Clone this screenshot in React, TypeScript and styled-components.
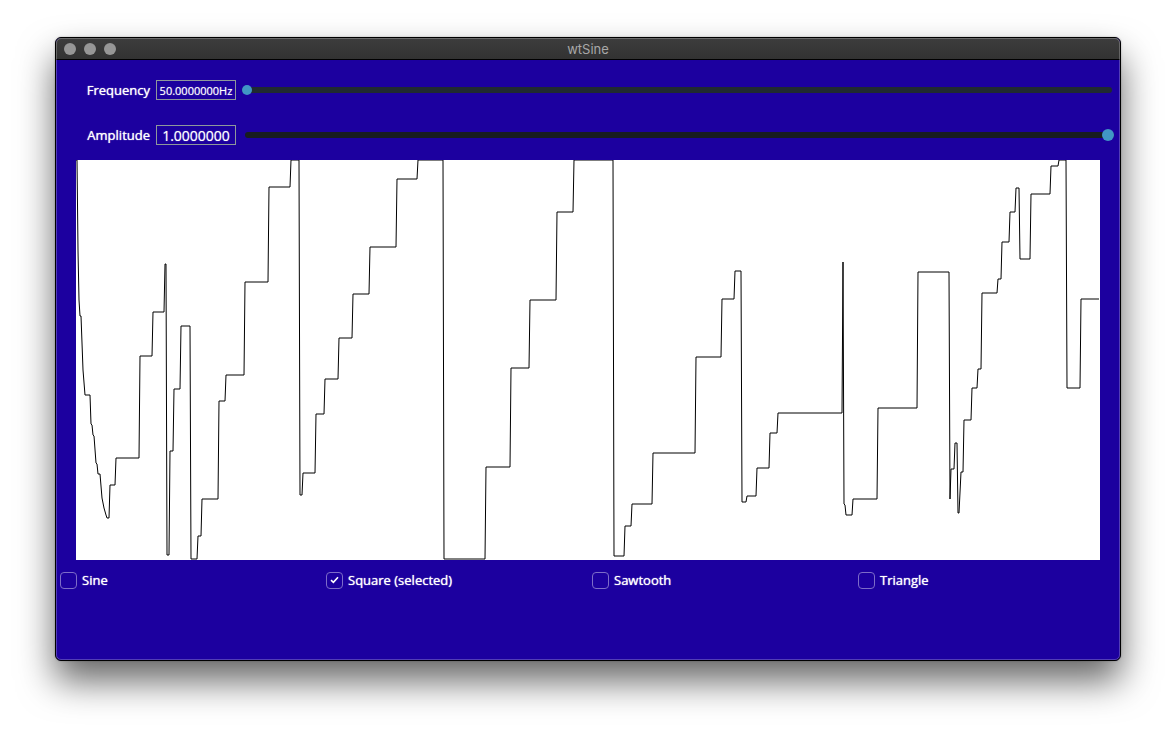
import React, { useState } from "react";
import styled, { createGlobalStyle } from "styled-components";

const GlobalStyle = createGlobalStyle`
  * { box-sizing: border-box; }
  body {
    margin: 0;
    background: #ffffff;
    color: #ffffff;
    font: 500 13px/20px "Open Sans", "Noto Sans", sans-serif;
  }
`;

const Desktop = styled.main`
  padding: 37px 55px 73px;
  overflow: hidden;
`;

const Window = styled.section`
  position: relative;
  border: 1px solid #000000;
  border-radius: 6px;
  background: #1c009f;
  box-shadow: 0 20px 36px rgba(0, 0, 0, 0.6), 0 0 2px rgba(0, 0, 0, 0.3);

  &::after {
    content: "";
    position: absolute;
    inset: 0;
    border: 1px solid rgba(255, 255, 255, 0.24);
    border-radius: 5px;
    pointer-events: none;
  }
`;

const TitleBar = styled.header`
  display: grid;
  grid-template-columns: 1fr auto 1fr;
  align-items: center;
  height: 22px;
  padding: 0 8px;
  border-bottom: 1px solid #000000;
  border-radius: 5px 5px 0 0;
  background: linear-gradient(#3d3d3d, #323232);
`;

const WindowButtons = styled.div`
  display: flex;
  gap: 8px;
`;

const WindowButton = styled.button`
  width: 12px;
  height: 12px;
  padding: 0;
  border: 0;
  border-radius: 50%;
  background: #969696;
`;

const Title = styled.h1`
  margin: 0;
  color: #a8a8a8;
  font: 400 13px/20px Inter, sans-serif;
`;

const Controls = styled.div`
  display: grid;
  gap: 25px;
  padding: 20px 6px 15px 0;
`;

const ControlRow = styled.div`
  display: grid;
  grid-template-columns: 94px 80px 1fr;
  column-gap: 6px;
  align-items: center;
  height: 20px;
`;

const ControlLabel = styled.label`
  text-align: right;
  text-shadow: 0 0 1px #ffffff;
`;

const ValueBox = styled.input<{ $small?: boolean }>`
  width: 80px;
  height: 20px;
  padding: 0;
  border: 1px solid #8e989b;
  border-radius: 0;
  outline: 0;
  background: transparent;
  color: #ffffff;
  text-align: center;
  text-shadow: 0 0 1px rgba(255, 255, 255, 0.6);
  font: 500 ${(p) => (p.$small ? 11 : 14)}px/18px "Open Sans", "Noto Sans", sans-serif;
`;

const Slider = styled.input<{ $thumb: number; $track: number; $tone: string; $start: number; $end: number }>`
  appearance: none;
  display: block;
  height: ${(p) => p.$thumb}px;
  margin: 0 ${(p) => p.$end}px 0 ${(p) => p.$start}px;
  background: transparent;

  &::-webkit-slider-runnable-track {
    height: ${(p) => p.$track}px;
    border-radius: 3px;
    background: ${(p) => p.$tone};
  }

  &::-webkit-slider-thumb {
    appearance: none;
    width: ${(p) => p.$thumb}px;
    height: ${(p) => p.$thumb}px;
    margin-top: ${(p) => (p.$track - p.$thumb) / 2}px;
    border-radius: 50%;
    background: #4196c5;
  }
`;

const Plot = styled.svg`
  display: block;
  width: calc(100% - 40px);
  height: 400px;
  margin: 0 20px;
  background: #ffffff;
`;

const Shapes = styled.div`
  display: grid;
  grid-template-columns: repeat(4, 1fr);
  padding: 10px 0 70px;
`;

const ShapeOption = styled.label`
  display: flex;
  align-items: center;
  gap: 5px;
  padding-left: 4px;
  text-shadow: 0 0 1px #ffffff;
`;

const TickBox = styled.span`
  display: grid;
  place-items: center;

  & > * {
    grid-area: 1 / 1;
  }
`;

const Tick = styled.input`
  appearance: none;
  width: 17px;
  height: 17px;
  margin: 0;
  border: 1px solid #7d6cc8;
  border-radius: 4px;
`;

const TickMark = styled.svg`
  width: 9px;
  height: 8px;
  pointer-events: none;
`;

const WAVE = `0,0 1,0 2,90 3,140 4,156 5,156 7,210 9,235 14,235 15,264 16,265 17,275 18,276 20,303
21,304 22,314 24,314 26,338 28,348 30,355 31,358 33,358 34,325 39,325 40,298 63,298 64,196 76,196 77,152
88,152 89,104 90,104 91,395 93,395 94,291 97,291 98,229 104,229 105,166 114,166 115,399 121,399
122,376 125,376 126,339 142,339 143,241 149,241 150,215 168,215 169,122 192,122 193,27 214,27
215,0 223,0 224,335 226,335 227,313 239,313 240,254 248,254 249,219 262,219 263,178 276,178
277,134 293,134 294,87 320,87 321,19 341,19 342,0 367,0 368,399 409,399 410,307 434,307 435,208
453,208 454,140 480,140 481,52 497,52 498,0 537,0 538,396 548,396 549,366 555,366 556,344 576,344
577,293 619,293 620,197 645,197 646,139 658,139 659,111 665,111 666,342 670,342 671,336 680,336
681,308 693,308 694,273 701,273 702,253 766,253 767,102 768,344 769,345 770,355 776,355 777,339
801,339 802,248 841,248 842,112 873,112 874,339 875,309 878,309 879,283 881,283 882,353 883,353
885,312 887,312 888,260 895,260 896,228 901,228 902,209 905,209 906,133 921,133 922,119 925,119
926,82 933,82 934,52 939,52 940,28 943,28 944,99 954,99 955,34 974,34 975,6 982,6 983,0 990,0
991,228 1004,228 1005,139 1023,139`;

const SHAPES = ["Sine", "Square", "Sawtooth", "Triangle"];

export default function App() {
  const [frequency, setFrequency] = useState(50);
  const [amplitude, setAmplitude] = useState(1);
  const [shape, setShape] = useState("Square");

  return (
    <>
      <GlobalStyle />
      <Desktop>
        <Window>
          <TitleBar>
            <WindowButtons>
              <WindowButton aria-label="Close" />
              <WindowButton aria-label="Minimize" />
              <WindowButton aria-label="Zoom" />
            </WindowButtons>
            <Title>wtSine</Title>
          </TitleBar>
          <Controls>
            <ControlRow>
              <ControlLabel htmlFor="frequency">Frequency</ControlLabel>
              <ValueBox $small readOnly aria-label="Frequency value" value={`${frequency.toFixed(7)}Hz`} />
              <Slider
                id="frequency"
                type="range"
                min={50}
                max={5000}
                step="any"
                value={frequency}
                onChange={(e) => setFrequency(Number(e.target.value))}
                $thumb={10}
                $track={6}
                $tone="#202a30"
                $start={0}
                $end={2}
              />
            </ControlRow>
            <ControlRow>
              <ControlLabel htmlFor="amplitude">Amplitude</ControlLabel>
              <ValueBox readOnly aria-label="Amplitude value" value={amplitude.toFixed(7)} />
              <Slider
                id="amplitude"
                type="range"
                min={0}
                max={1}
                step="any"
                value={amplitude}
                onChange={(e) => setAmplitude(Number(e.target.value))}
                $thumb={12}
                $track={6}
                $tone="#181c20"
                $start={3}
                $end={0}
              />
            </ControlRow>
          </Controls>
          <Plot viewBox="0 0 1024 400" preserveAspectRatio="none" role="img" aria-label="Waveform">
            <polyline points={WAVE} fill="none" stroke="#000000" strokeWidth="1" vectorEffect="non-scaling-stroke" />
          </Plot>
          <Shapes>
            {SHAPES.map((name) => (
              <ShapeOption key={name}>
                <TickBox>
                  <Tick type="checkbox" checked={shape === name} onChange={() => setShape(name)} />
                  {shape === name && (
                    <TickMark viewBox="0 0 9 8" aria-hidden="true">
                      <path d="M1 4.2 3.4 6.4 8 1.2" fill="none" stroke="#ffffff" strokeWidth="1.6" />
                    </TickMark>
                  )}
                </TickBox>
                {shape === name ? `${name} (selected)` : name}
              </ShapeOption>
            ))}
          </Shapes>
        </Window>
      </Desktop>
    </>
  );
}
